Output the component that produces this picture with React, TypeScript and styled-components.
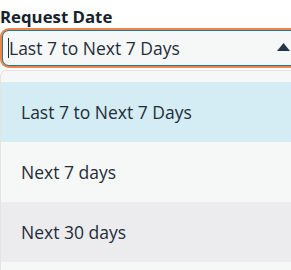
import React from "react";
import styled, { createGlobalStyle } from "styled-components";

const Global = createGlobalStyle`
  html, body { margin: 0; padding: 0; background: #ffffff; overflow: hidden; }
  body { font-family: "Open Sans", "Noto Sans", sans-serif; color: #1f2d3a; }
`;

const Wrap = styled.div`
  width: 300px;
  height: 270px;
  overflow: hidden;
  display: flex;
  flex-direction: column;
`;

const Label = styled.label`
  font-size: 16.8px;
  font-weight: 700;
  line-height: 18px;
  padding-top: 8px;
  color: #16212b;
`;

const Field = styled.div`
  margin: 4px 2px 0 2px;
  height: 34px;
  border: 1px solid #1f7a9c;
  box-shadow: 0 0 0 2px #ef8449;
  border-radius: 7px;
  background: #f6f8f8;
  display: flex;
  align-items: center;
  padding: 0 0 0 5px;
  flex-shrink: 0;
`;

const Caret = styled.span`
  width: 1px;
  height: 20px;
  background: #1f2d3a;
`;

const Value = styled.span`
  flex: 1;
  font-size: 17.5px;
  color: #1f2d3a;
`;

const Arrow = styled.svg`
  width: 13px;
  height: 8px;
  margin-right: 7px;
  margin-top: -2px;
`;

const List = styled.ul`
  list-style: none;
  margin: 4px 0 0 0;
  padding: 11px 0 0 0;
  border: 1px solid #e2e4e6;
  border-bottom: none;
  border-radius: 6px 6px 0 0;
  background: #f6f8f8;
  display: flex;
  flex-direction: column;
  flex: 1;
`;

const Item = styled.li<{ $bg: string }>`
  height: 60px;
  flex-shrink: 0;
  display: flex;
  align-items: center;
  padding-left: 20px;
  font-size: 17.5px;
  color: #1f2d3a;
  background: ${(p) => p.$bg};
`;

const options = [
  { label: "Last 7 to Next 7 Days", bg: "#d4ecf4" },
  { label: "Next 7 days", bg: "#f6f8f8" },
  { label: "Next 30 days", bg: "#ececee" },
];

export default function App() {
  return (
    <Wrap>
      <Global />
      <Label>Request Date</Label>
      <Field>
        <Caret />
        <Value>Last 7 to Next 7 Days</Value>
        <Arrow viewBox="0 0 13 8">
          <path d="M6.5 0 L13 8 L0 8 Z" fill="#22364a" />
        </Arrow>
      </Field>
      <List>
        {options.map((o) => (
          <Item key={o.label} $bg={o.bg}>
            {o.label}
          </Item>
        ))}
      </List>
    </Wrap>
  );
}
